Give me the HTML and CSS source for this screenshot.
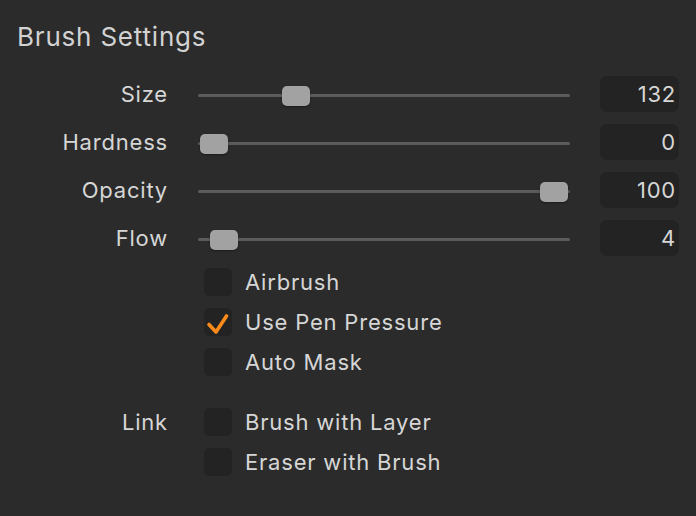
FILE: index.html
```html
<!DOCTYPE html>
<html lang="en">
<head>
    <meta charset="UTF-8">
    <title>Brush Settings</title>
    <link rel="stylesheet" href="styles.css">
</head>
<body>
    <div class="panel">
        <h1>Brush Settings</h1>
        <div class="form">
            <label class="name">Size</label>
            <div class="slider"><div class="track"></div><div class="thumb" style="left: 84px"></div></div>
            <div class="value">132</div>

            <label class="name">Hardness</label>
            <div class="slider"><div class="track"></div><div class="thumb" style="left: 2px"></div></div>
            <div class="value">0</div>

            <label class="name">Opacity</label>
            <div class="slider"><div class="track"></div><div class="thumb" style="left: 342px"></div></div>
            <div class="value">100</div>

            <label class="name">Flow</label>
            <div class="slider"><div class="track"></div><div class="thumb" style="left: 12px"></div></div>
            <div class="value">4</div>

            <span></span>
            <div class="check"><span class="box"></span>Airbrush</div>
            <span></span>

            <span></span>
            <div class="check"><span class="box">
                <svg width="28" height="28" viewBox="0 0 28 28"><path d="M5 16.5 L12 24 L22.5 8" fill="none" stroke="#fb8a1b" stroke-width="3.6" stroke-linecap="round" stroke-linejoin="round"/></svg>
            </span>Use Pen Pressure</div>
            <span></span>

            <span></span>
            <div class="check"><span class="box"></span>Auto Mask</div>
            <span></span>

            <label class="name link">Link</label>
            <div class="check link"><span class="box"></span>Brush with Layer</div>
            <span class="link"></span>

            <span></span>
            <div class="check"><span class="box"></span>Eraser with Brush</div>
            <span></span>
        </div>
    </div>
</body>
</html>
```

FILE: styles.css
```css
body {
    margin: 0;
    background-color: #2b2b2b;
    font-family: Inter, "Liberation Sans", sans-serif;
    color: #d6d6d6;
    letter-spacing: 0.8px;
}
.panel {
    width: 696px;
    height: 516px;
}
h1 {
    margin: 20px 0 16px 17px;
    font-size: 26px;
    line-height: 34px;
    font-weight: 400;
    color: #d2d2d2;
}
.form {
    display: grid;
    grid-template-columns: 168px 372px 79px;
    column-gap: 30px;
    align-items: center;
}
.name {
    text-align: right;
    font-size: 22px;
    line-height: 48px;
}
.slider {
    position: relative;
    height: 48px;
    display: flex;
    align-items: center;
}
.track {
    width: 100%;
    height: 3px;
    margin-top: 3px;
    background-color: #5b5b5b;
    border-radius: 2px;
}
.thumb {
    position: absolute;
    top: 16px;
    width: 28px;
    height: 20px;
    border-radius: 5px;
    background-color: #a2a2a2;
    box-shadow: 0 1px 2px rgba(0, 0, 0, 0.4);
}
.value {
    height: 36px;
    line-height: 36px;
    padding-right: 3px;
    text-align: right;
    font-size: 22px;
    background-color: #232323;
    border-radius: 7px;
}
.check {
    display: flex;
    align-items: center;
    gap: 13px;
    height: 40px;
    padding-left: 6px;
    font-size: 22px;
}
.box {
    width: 28px;
    height: 28px;
    border-radius: 5px;
    background-color: #232323;
}
.box svg {
    display: block;
}
.link {
    margin-top: 20px;
}
.name.link {
    line-height: 40px;
}
```
